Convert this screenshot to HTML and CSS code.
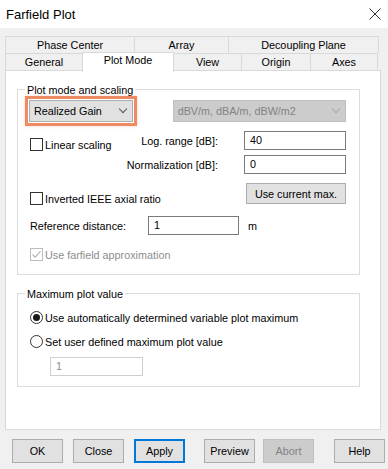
FILE: index.html
```html
<!DOCTYPE html>
<html lang="en">
<head>
  <meta charset="UTF-8">
  <title>Farfield Plot</title>
  <link rel="stylesheet" href="styles.css">
</head>
<body>
  <!-- Title bar -->
  <div class="titlebar">
    <span class="title">Farfield Plot</span>
    <svg class="close" width="12" height="12" viewBox="0 0 12 12">
      <path d="M0.5 0.5 L11.5 11.5 M11.5 0.5 L0.5 11.5" stroke="#333" stroke-width="1" fill="none"/>
    </svg>
  </div>

  <!-- Tabs -->
  <div class="tabs">
    <div class="tab-row">
      <div class="tab first" style="width:130px">Phase Center</div>
      <div class="tab" style="width:94px">Array</div>
      <div class="tab" style="width:150px">Decoupling Plane</div>
    </div>
    <div class="tab-row">
      <div class="tab first" style="width:78px">General</div>
      <div class="tab active" style="width:92px">Plot Mode</div>
      <div class="tab" style="width:68px">View</div>
      <div class="tab" style="width:69px">Origin</div>
      <div class="tab" style="width:67px">Axes</div>
    </div>
  </div>

  <!-- Tab page -->
  <div class="panel">
    <div class="group group-scaling">
      <div class="group-title">Plot mode and scaling</div>

      <div class="combo-row">
        <div class="combo highlighted">
          <span>Realized Gain</span>
          <span class="chevron"></span>
        </div>
        <div class="combo disabled">
          <span>dBV/m, dBA/m, dBW/m2</span>
          <span class="chevron"></span>
        </div>
      </div>

      <div class="scale-row">
        <label class="check"><span class="box"></span>Linear scaling</label>
        <div class="fields">
          <span class="field-label">Log. range [dB]:</span>
          <div class="input">40</div>
          <span class="field-label">Normalization [dB]:</span>
          <div class="input">0</div>
        </div>
      </div>

      <div class="axial-row">
        <label class="check"><span class="box"></span>Inverted IEEE axial ratio</label>
        <div class="btn wide">Use current max.</div>
      </div>

      <div class="distance-row">
        <span class="distance-label">Reference distance:</span>
        <div class="input distance">1</div>
        <span class="unit">m</span>
      </div>

      <label class="check disabled farfield">
        <span class="box">
          <svg width="11" height="11" viewBox="0 0 11 11"><path d="M1.5 5.5 L4.2 8.2 L9.5 2.2" stroke="#b5b5b5" stroke-width="1.1" fill="none"/></svg>
        </span>Use farfield approximation
      </label>
    </div>

    <div class="group group-max">
      <div class="group-title">Maximum plot value</div>
      <label class="radio first"><span class="dot on"></span>Use automatically determined variable plot maximum</label>
      <label class="radio"><span class="dot"></span>Set user defined maximum plot value</label>
      <div class="input max-value">1</div>
    </div>
  </div>

  <!-- Dialog buttons -->
  <div class="buttons">
    <div class="btn" style="margin-left:12px">OK</div>
    <div class="btn" style="margin-left:10px">Close</div>
    <div class="btn default" style="margin-left:10px">Apply</div>
    <div class="btn" style="margin-left:19px">Preview</div>
    <div class="btn disabled" style="margin-left:8px">Abort</div>
    <div class="btn" style="margin-left:20px">Help</div>
  </div>
</body>
</html>
```

FILE: styles.css
```css
/* Basic reset */
* {
  margin: 0;
  padding: 0;
  box-sizing: border-box;
}
body {
  width: 388px;
  height: 469px;
  overflow: hidden;
  background: #f0f0f0;
  font-family: "Liberation Sans", Arial, sans-serif;
  font-size: 10.8px;
  color: #000;
}

/* Title bar */
.titlebar {
  height: 28px;
  background: #fff;
  display: flex;
  align-items: center;
  justify-content: space-between;
  padding: 0 7px 0 6px;
}
.title {
  font-size: 13px;
}

/* Tabs */
.tabs {
  margin: 8px 0 0 5px;
  width: 374px;
}
.tab-row {
  display: flex;
  height: 17px;
}
.tab {
  height: 17px;
  border-top: 1px solid #d9d9d9;
  border-right: 1px solid #d9d9d9;
  background: #f0f0f0;
  text-align: center;
  line-height: 16px;
}
.tab.first {
  border-left: 1px solid #d9d9d9;
}
.tab.active {
  position: relative;
  z-index: 2;
  height: 20px;
  margin-top: -1px;
  margin-left: -1px;
  border-left: 1px solid #d9d9d9;
  background: #fff;
  line-height: 14px;
}

/* Tab page */
.panel {
  margin-left: 5px;
  width: 376px;
  height: 360px;
  background: #fff;
  border: 1px solid #d9d9d9;
  padding: 18px 0 0 11px;
}

/* Group boxes */
.group {
  width: 343px;
  border: 1px solid #dcdcdc;
  padding: 0 13px 0 12px;
}
.group-scaling {
  height: 186px;
}
.group-max {
  height: 94px;
  margin-top: 18px;
}
.group-title {
  width: fit-content;
  height: 14px;
  line-height: 14px;
  margin: -7px 0 0 -5px;
  padding: 0 2px;
  background: #fff;
}

/* Combo boxes */
.combo-row {
  display: flex;
  margin-top: 3px;
}
.combo {
  height: 22px;
  display: flex;
  align-items: center;
  justify-content: space-between;
  padding: 0 6px 0 4px;
  background: #e1e1e1;
  border: 1px solid #adadad;
}
.combo.highlighted {
  width: 104px;
  margin-left: -1px;
  box-shadow: 0 0 0 1px #fff, 0 0 0 4px #ee8a64, 0 0 3px 4px rgba(238, 138, 100, 0.35);
}
.combo.disabled {
  width: 174px;
  margin-left: 40px;
  background: #cccccc;
  border-color: #bfbfbf;
  color: #838383;
}
.chevron {
  width: 6px;
  height: 6px;
  border-right: 1px solid #555;
  border-bottom: 1px solid #555;
  transform: rotate(45deg);
  margin-top: -4px;
}
.combo.disabled .chevron {
  border-color: #a8a8a8;
}

/* Check boxes and radios */
.check,
.radio {
  display: flex;
  align-items: center;
  height: 13px;
  white-space: nowrap;
}
.box {
  width: 13px;
  height: 13px;
  border: 1px solid #333;
  background: #fff;
  margin-right: 2px;
  display: flex;
  align-items: center;
  justify-content: center;
}
.check.disabled {
  color: #8d8d8d;
}
.check.disabled .box {
  border-color: #bcbcbc;
}
.dot {
  width: 13px;
  height: 13px;
  border: 1px solid #333;
  border-radius: 50%;
  margin-right: 2px;
  display: flex;
  align-items: center;
  justify-content: center;
}
.dot.on::after {
  content: "";
  width: 7px;
  height: 7px;
  border-radius: 50%;
  background: #1a1a1a;
}

/* Text inputs */
.input {
  height: 19px;
  border: 1px solid #7a7a7a;
  background: #fff;
  padding: 0 5px;
  line-height: 17px;
}

/* Scaling rows */
.scale-row {
  display: flex;
  margin-top: 9px;
}
.scale-row .check {
  margin-top: 7px;
}
.fields {
  margin-left: auto;
  display: grid;
  grid-template-columns: auto 102px;
  column-gap: 26px;
  row-gap: 5px;
  align-items: center;
}
.field-label {
  text-align: right;
}
.axial-row {
  display: flex;
  align-items: flex-start;
  margin-top: 9px;
}
.axial-row .check {
  margin-top: 9px;
}
.distance-row {
  display: flex;
  align-items: center;
  margin-top: 11px;
}
.distance-label {
  width: 118px;
}
.input.distance {
  width: 91px;
}
.unit {
  margin-left: 9px;
}
.farfield {
  margin-top: 13px;
}

/* Maximum plot value */
.radio {
  margin-top: 11px;
}
.radio.first {
  margin-top: 10px;
}
.input.max-value {
  width: 93px;
  margin: 9px 0 0 20px;
  border-color: #cfcfcf;
  color: #8d8d8d;
}

/* Buttons */
.btn {
  width: 51px;
  height: 24px;
  display: flex;
  align-items: center;
  justify-content: center;
  background: #e1e1e1;
  border: 1px solid #adadad;
  white-space: nowrap;
}
.btn.wide {
  width: 100px;
  height: 21px;
  margin-left: auto;
}
.btn.default {
  border: 2px solid #0078d7;
}
.btn.disabled {
  background: #cccccc;
  border-color: #bfbfbf;
  color: #838383;
}
.buttons {
  display: flex;
  margin-top: 9px;
}
```
